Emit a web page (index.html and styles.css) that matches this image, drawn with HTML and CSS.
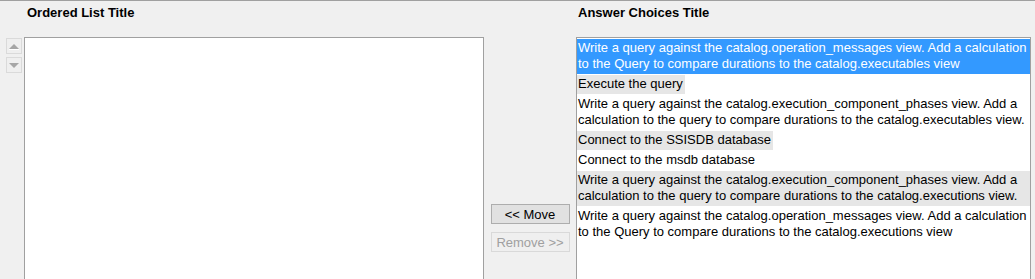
FILE: index.html
```html
<!DOCTYPE html>
<html>
<head>
    <link rel="stylesheet" href="styles.css">
</head>
<body>
  <div class="panel">
    <div class="arrows">
      <button class="arrow" disabled><span class="tri up"></span></button>
      <button class="arrow" disabled><span class="tri down"></span></button>
    </div>

    <div class="column">
      <div class="title">Ordered List Title</div>
      <div class="listbox ordered"></div>
    </div>

    <div class="actions">
      <button class="action">&lt;&lt; Move</button>
      <button class="action" disabled>Remove &gt;&gt;</button>
    </div>

    <div class="column">
      <div class="title answers-title">Answer Choices Title</div>
      <div class="listbox choices">
        <div class="choice selected">Write a query against the catalog.operation_messages view. Add a calculation to the Query to compare durations to the catalog.executables view</div>
        <div class="choice shaded">Execute the query</div>
        <div class="choice">Write a query against the catalog.execution_component_phases view. Add a calculation to the query to compare durations to the catalog.executables view.</div>
        <div class="choice shaded">Connect to the SSISDB database</div>
        <div class="choice">Connect to the msdb database</div>
        <div class="choice shaded">Write a query against the catalog.execution_component_phases view. Add a calculation to the query to compare durations to the catalog.executions view.</div>
        <div class="choice">Write a query against the catalog.operation_messages view. Add a calculation to the Query to compare durations to the catalog.executions view</div>
      </div>
    </div>
  </div>
</body>
</html>
```

FILE: styles.css
```css
html, body {
    margin: 0;
    height: 100%;
    overflow: hidden;
}
body {
    font-family: Arial, "Liberation Sans", sans-serif;
    font-size: 13px;
    color: #000;
    background-color: #f0f0f0;
    border-top: 1px solid #a0a0a0;
    box-sizing: border-box;
}
.panel {
    display: flex;
    align-items: flex-start;
}
.arrows {
    width: 24px;
    padding: 37px 0 0 6px;
    box-sizing: border-box;
    display: flex;
    flex-direction: column;
    gap: 3px;
}
.arrow {
    width: 16px;
    height: 16px;
    padding: 0;
    border: 1px solid #dadada;
    background-color: #efefef;
    display: flex;
    align-items: center;
    justify-content: center;
}
.tri {
    width: 0;
    height: 0;
    border-left: 5px solid transparent;
    border-right: 5px solid transparent;
}
.tri.up {
    border-bottom: 5px solid #a6a6a6;
    box-shadow: 0 1px 0 #ffffff;
}
.tri.down {
    border-top: 5px solid #a6a6a6;
}
.column {
    display: flex;
    flex-direction: column;
}
.title {
    font-weight: bold;
    height: 36px;
    padding: 4px 0 0 3px;
    box-sizing: border-box;
    line-height: 16px;
}
.answers-title {
    padding-left: 2px;
}
.listbox {
    background-color: #fff;
    border: 1px solid #a0a0a0;
    border-bottom: 0;
    height: calc(100vh - 37px);
    box-sizing: border-box;
    overflow: hidden;
}
.ordered {
    width: 460px;
}
.choices {
    width: 455px;
    padding-top: 1px;
}
.actions {
    width: 92px;
    padding-top: 203px;
    display: flex;
    flex-direction: column;
    align-items: center;
    gap: 8px;
}
.action {
    width: 79px;
    height: 20px;
    padding: 0;
    font-family: Arial, "Liberation Sans", sans-serif;
    font-size: 13px;
    color: #000;
    background-color: #e1e1e1;
    border: 1px solid #adadad;
}
.action:disabled {
    color: #a0a0a0;
    background-color: #efefef;
    border-color: #d9d9d9;
}
.choice {
    display: table;
    line-height: 16px;
    padding: 1px 2px 2px 1px;
    margin-bottom: 1px;
}
.choice.selected {
    background-color: #3399ff;
    color: #fff;
}
.choice.shaded {
    background-color: #e6e6e6;
}
```
